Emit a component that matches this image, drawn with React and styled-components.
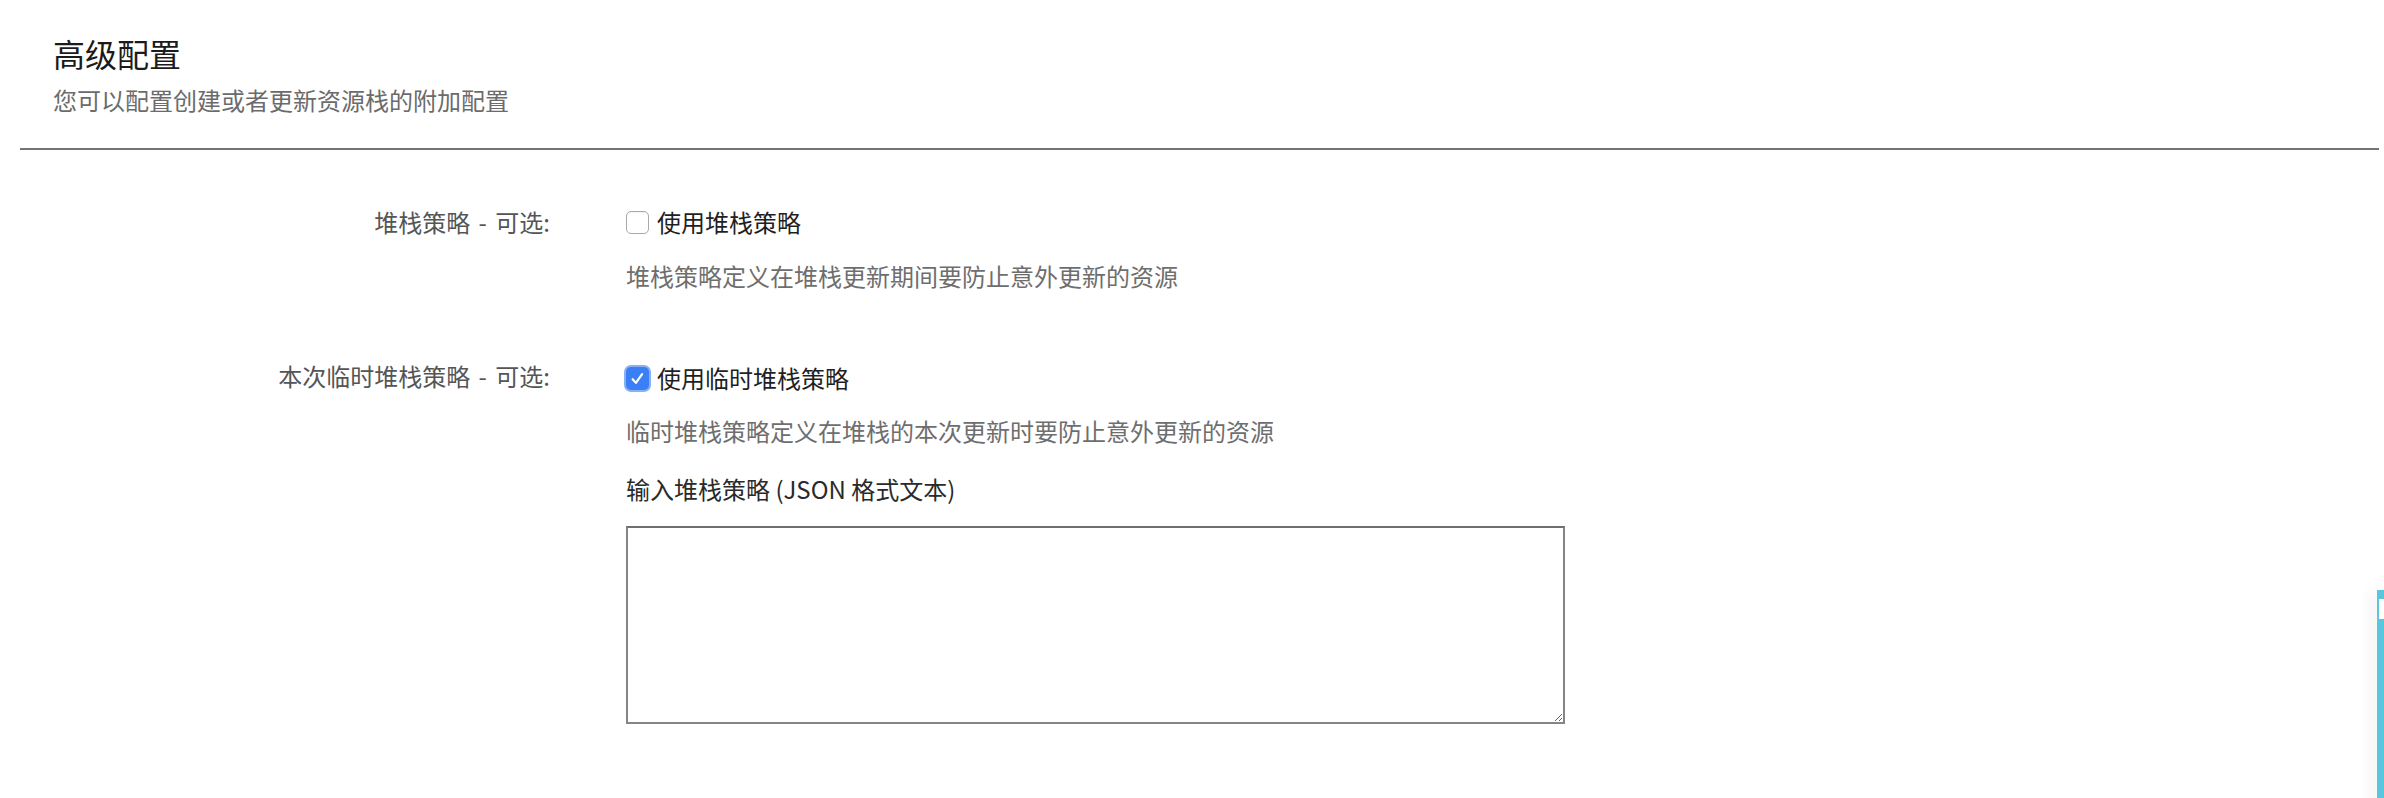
import styled, { createGlobalStyle } from "styled-components";

const GlobalStyle = createGlobalStyle`
    body {
        margin: 0;
        background: #ffffff;
        font-family: "Noto Sans CJK SC", "Noto Sans", sans-serif;
    }
`

const Page = styled.div`
    padding: 0 5px 80px 20px;
`

const Header = styled.div`
    padding: 31px 33px 30px;
`

const Title = styled.h2`
    margin: 0;
    font-size: 32px;
    line-height: 44px;
    font-weight: 400;
    color: #1b1b1b;
`

const Subtitle = styled.p`
    margin: 7px 0 0;
    font-size: 24px;
    line-height: 36px;
    color: #6b6b6b;
`

const Divider = styled.hr`
    margin: 0;
    border: none;
    height: 2px;
    background: #747474;
`

const Form = styled.div`
    display: flex;
    flex-direction: column;
    gap: 64px;
    padding-top: 54px;
`

const Row = styled.div`
    display: grid;
    grid-template-columns: 530px 1fr;
    column-gap: 76px;
    align-items: start;
`

const Label = styled.div`
    text-align: right;
    font-size: 24px;
    line-height: 36px;
    word-spacing: 3px;
    color: #555555;
`

const Field = styled.div`
    display: flex;
    flex-direction: column;
    align-items: flex-start;
`

const CheckLine = styled.label`
    display: flex;
    align-items: center;
    gap: 8px;
    font-size: 24px;
    line-height: 36px;
    color: #1f1f1f;
    margin-top: ${(p) => p.$offset || 0}px;
`

const Box = styled.span`
    box-sizing: border-box;
    display: inline-flex;
    align-items: center;
    justify-content: center;
    width: 23px;
    height: 23px;
    border-radius: 5px;
    border: ${(p) => (p.$checked ? "none" : "1.5px solid #a9a9a9")};
    background: ${(p) => (p.$checked ? "#3a7ff6" : "#ffffff")};
    box-shadow: ${(p) => (p.$checked ? "0 0 0 2px rgba(96, 150, 240, 0.75)" : "inset 0 1px 1px rgba(0,0,0,0.05)")};
`

const Help = styled.div`
    margin-top: ${(p) => p.$gap}px;
    font-size: 24px;
    line-height: 36px;
    color: #6e6e6e;
`

const SubLabel = styled.div`
    margin-top: 22px;
    font-size: 24px;
    line-height: 36px;
    color: #2a2a2a;
`

const TextArea = styled.textarea`
    box-sizing: border-box;
    margin-top: 19px;
    width: 939px;
    height: 198px;
    border: 2px solid #858585;
    border-top-color: #6f6f6f;
    border-radius: 0;
    padding: 8px;
    font-family: "Liberation Mono", monospace;
    font-size: 22px;
    resize: both;
    outline: none;
`

const SideTab = styled.div`
    position: fixed;
    right: 0;
    top: 590px;
    width: 7px;
    height: 220px;
    background: #58c6dc;
    box-shadow: -6px 0 14px rgba(0, 0, 0, 0.07);
`

const SideTabMark = styled.div`
    margin: 9px 0 0 2px;
    width: 5px;
    height: 20px;
    background: #ffffff;
`

const Check = () => (
    <svg width="17" height="17" viewBox="0 0 14 14">
        <path d="M3 7.6 L5.7 10.6 L10.8 3.4" fill="none" stroke="#ffffff" strokeWidth="1.8" strokeLinecap="round" strokeLinejoin="round" />
    </svg>
)

const App = () => {
    return (
        <>
            <GlobalStyle />
            <Page>
                <Header>
                    <Title>高级配置</Title>
                    <Subtitle>您可以配置创建或者更新资源栈的附加配置</Subtitle>
                </Header>
                <Divider />
                <Form>
                    <Row>
                        <Label>堆栈策略 - 可选:</Label>
                        <Field>
                            <CheckLine>
                                <Box />
                                使用堆栈策略
                            </CheckLine>
                            <Help $gap={18}>堆栈策略定义在堆栈更新期间要防止意外更新的资源</Help>
                        </Field>
                    </Row>
                    <Row>
                        <Label>本次临时堆栈策略 - 可选:</Label>
                        <Field>
                            <CheckLine $offset={2}>
                                <Box $checked>
                                    <Check />
                                </Box>
                                使用临时堆栈策略
                            </CheckLine>
                            <Help $gap={17}>临时堆栈策略定义在堆栈的本次更新时要防止意外更新的资源</Help>
                            <SubLabel>输入堆栈策略 (JSON 格式文本)</SubLabel>
                            <TextArea />
                        </Field>
                    </Row>
                </Form>
            </Page>
            <SideTab>
                <SideTabMark />
            </SideTab>
        </>
    );
};

export default App;
